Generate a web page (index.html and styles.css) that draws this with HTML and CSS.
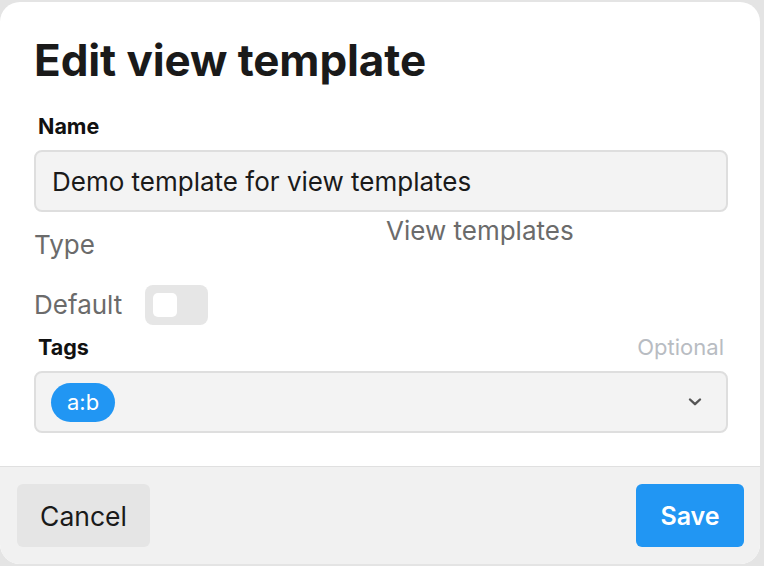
FILE: index.html
```html
<!DOCTYPE html>
<html lang="en">
<head>
<meta charset="utf-8">
<title>Edit view template</title>
<link rel="stylesheet" href="styles.css">
</head>
<body>
<div class="modal">
  <div class="modal-body">
    <h1 class="title">Edit view template</h1>
    <div class="field field-name">
      <div class="label-row"><span class="label">Name</span></div>
      <div class="input">Demo template for view templates</div>
    </div>
    <div class="type-row">
      <span class="muted type-label">Type</span>
      <span class="muted type-value">View templates</span>
    </div>
    <div class="default-row">
      <span class="muted">Default</span>
      <span class="toggle"><span class="knob"></span></span>
    </div>
    <div class="field field-tags">
      <div class="label-row"><span class="label">Tags</span><span class="optional">Optional</span></div>
      <div class="input select">
        <span class="chip">a:b</span>
        <svg class="chevron" width="14" height="10" viewBox="0 0 14 10"><path d="M2 2.5 L7 7.2 L12 2.5" fill="none" stroke="#555" stroke-width="2.4" stroke-linecap="round" stroke-linejoin="round"/></svg>
      </div>
    </div>
  </div>
  <div class="modal-footer">
    <button class="btn btn-cancel">Cancel</button>
    <button class="btn btn-save">Save</button>
  </div>
</div>
</body>
</html>
```
FILE: styles.css
```css
* { box-sizing: border-box; }
html, body { margin: 0; padding: 0; }
body {
  background: #e4e4e4;
  font-family: Inter, "Liberation Sans", sans-serif;
  width: 764px;
  height: 566px;
  overflow: hidden;
}
.modal {
  margin-top: 2px;
  width: 760px;
  height: 562px;
  background: #fff;
  border-radius: 20px;
  overflow: hidden;
  display: flex;
  flex-direction: column;
}
.modal-body {
  flex: 1;
  padding: 31px 32px 0 34px;
}
.title {
  margin: 0;
  font-size: 44px;
  line-height: 54px;
  font-weight: 700;
  color: #1a1a1a;
  letter-spacing: -0.1px;
}
.field-name { margin-top: 26px; }
.field-tags { margin-top: 9px; }
.label-row {
  display: flex;
  justify-content: space-between;
  align-items: baseline;
  height: 26px;
  line-height: 26px;
  padding: 0 4px;
  margin-bottom: 11px;
}
.label {
  font-size: 21.5px;
  font-weight: 700;
  color: #111;
}
.optional {
  font-size: 22px;
  color: #b8bcc2;
}
.input {
  height: 62px;
  background: #f3f3f3;
  border: 2px solid #dedede;
  border-radius: 8px;
  display: flex;
  align-items: center;
  padding: 0 16px;
  font-size: 26px;
  color: #1a1a1a;
}
.muted { color: #6b6b6b; font-size: 26px; line-height: 32px; }
.type-row {
  display: flex;
  align-items: flex-start;
  height: 73px;
}
.type-label { width: 352px; margin-top: 17px; }
.type-value { margin-top: 3px; }
.default-row {
  display: flex;
  align-items: center;
  gap: 23px;
  height: 40px;
}
.toggle {
  width: 63px;
  height: 40px;
  background: #e6e6e6;
  border-radius: 8px;
  padding: 8px;
  display: flex;
}
.knob {
  width: 24px;
  height: 24px;
  background: #fff;
  border-radius: 5px;
}
.select { justify-content: space-between; padding-right: 24px; padding-left: 15px; }
.chip {
  background: #2196f3;
  color: #fff;
  font-size: 22px;
  height: 39px;
  padding: 0 16px;
  border-radius: 20px;
  display: flex;
  align-items: center;
}
.modal-footer {
  height: 98px;
  background: #f1f1f1;
  border-top: 1px solid #e0e0e0;
  display: flex;
  justify-content: space-between;
  align-items: flex-start;
  padding: 17px 16px 0 17px;
}
.btn {
  height: 63px;
  border: none;
  border-radius: 6px;
  font-family: Inter, "Liberation Sans", sans-serif;
  font-size: 26.5px;
  padding: 0;
}
.btn-cancel { background: #e5e5e5; color: #1a1a1a; width: 133px; }
.btn-save { background: #2196f3; color: #fff; font-weight: 600; font-size: 25px; width: 108px; }
```
